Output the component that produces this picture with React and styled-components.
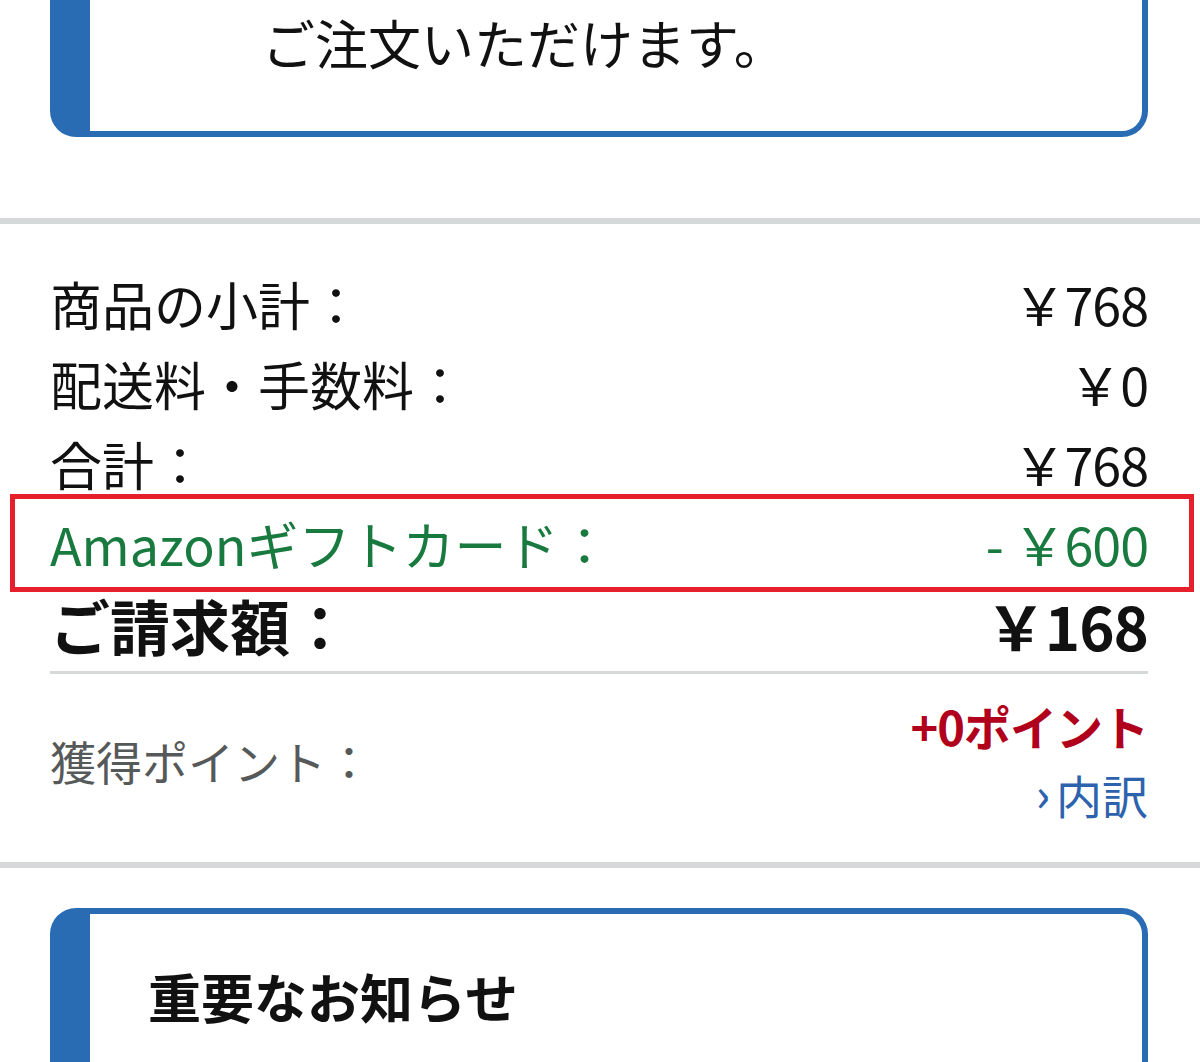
import React from "react";
import styled, { createGlobalStyle } from "styled-components";

const Global = createGlobalStyle`
  html, body { margin: 0; padding: 0; background: #fff; }
  body {
    font-family: "Noto Sans CJK JP", "Noto Sans", sans-serif;
    color: #0f1111;
    overflow: hidden;
  }
`;

const Page = styled.div`
  width: 1200px;
  height: 1062px;
  overflow: hidden;
`;

const Inset = styled.div`
  padding: 0 52px 0 50px;
`;

const InfoBox = styled.div`
  border: 6px solid #2a6cb3;
  border-left-width: 40px;
  border-radius: 26px;
  padding: ${(p) => p.$pad};
  margin-top: ${(p) => p.$mt || "0"};
  font-size: ${(p) => p.$size}px;
  font-weight: ${(p) => p.$weight || 400};
  line-height: 60px;
  color: #111;
  white-space: nowrap;
`;

const Divider = styled.div`
  height: 6px;
  background: #d5d9d9;
  margin: ${(p) => p.$m};
`;

const Rows = styled.div`
  display: flex;
  flex-direction: column;
  padding-top: 40px;
`;

const Row = styled.div`
  position: relative;
  display: flex;
  justify-content: space-between;
  align-items: center;
  font-size: ${(p) => (p.$big ? 60 : 52)}px;
  line-height: ${(p) => (p.$big ? 82 : 80)}px;
  font-weight: ${(p) => (p.$big ? 700 : 400)};
  color: ${(p) => p.$color || "#111"};
  white-space: nowrap;
`;

const Highlight = styled.div`
  position: absolute;
  top: -10px;
  bottom: -8px;
  left: -40px;
  right: -46px;
  border: 5px solid #e5202a;
  pointer-events: none;
`;

const Price = styled.span`
  letter-spacing: -1px;
`;

const Rule = styled.div`
  height: 3px;
  background: #d5d9d9;
  margin-top: 5px;
`;

const Points = styled.div`
  display: flex;
  justify-content: space-between;
  align-items: center;
  padding: 18px 0 34px;
`;

const PointLabel = styled.span`
  font-size: 46px;
  color: #565959;
`;

const PointCol = styled.div`
  display: flex;
  flex-direction: column;
  align-items: flex-end;
`;

const PointValue = styled.span`
  font-size: 47px;
  line-height: 68px;
  font-weight: 700;
  color: #b1001c;
  letter-spacing: -1px;
`;

const Breakdown = styled.a`
  font-size: 46px;
  line-height: 68px;
  color: #2d62ad;
  text-decoration: none;
  display: flex;
  align-items: center;
  gap: 6px;
`;

const Chevron = styled.span`
  font-size: 46px;
  line-height: 1;
  margin-top: -4px;
  font-weight: 500;
`;

export default function App() {
  return (
    <Page>
      <Global />
      <Inset>
        <InfoBox $mt="-44px" $pad="50px 20px 59px 172px" $size={53}>
          ご注文いただけます。
        </InfoBox>
      </Inset>
      <Divider $m="81px 0 0" />
      <Inset>
        <Rows>
          <Row>
            <span>商品の小計：</span>
            <Price>￥768</Price>
          </Row>
          <Row>
            <span>配送料・手数料：</span>
            <Price>￥0</Price>
          </Row>
          <Row>
            <span>合計：</span>
            <Price>￥768</Price>
          </Row>
          <Row $color="#187a3e">
            <span>Amazonギフトカード：</span>
            <Price>- ￥600</Price>
            <Highlight />
          </Row>
          <Row $big>
            <span>ご請求額：</span>
            <Price>￥168</Price>
          </Row>
        </Rows>
        <Rule />
        <Points>
          <PointLabel>獲得ポイント：</PointLabel>
          <PointCol>
            <PointValue>+0ポイント</PointValue>
            <Breakdown href="#">
              <Chevron>›</Chevron>内訳
            </Breakdown>
          </PointCol>
        </Points>
      </Inset>
      <Divider $m="0" />
      <Inset>
        <InfoBox $mt="40px" $pad="52px 20px 200px 58px" $size={53} $weight={700}>
          重要なお知らせ
        </InfoBox>
      </Inset>
    </Page>
  );
}
